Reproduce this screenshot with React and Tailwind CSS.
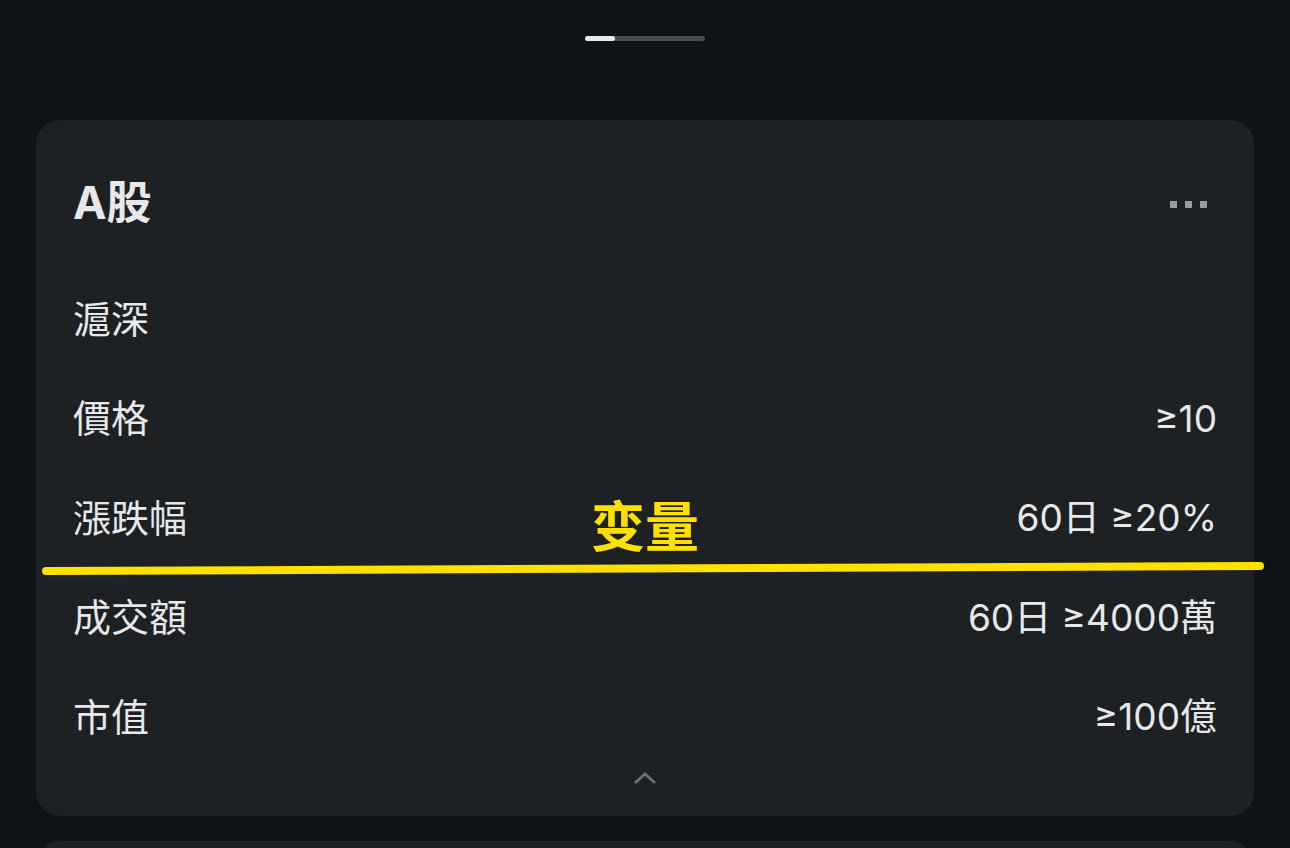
import React from "react";

const rows = [
    { label: "滬深", value: "" },
    { label: "價格", value: "≥10" },
    { label: "漲跌幅", value: "60日 ≥20%" },
    { label: "成交額", value: "60日 ≥4000萬" },
    { label: "市值", value: "≥100億" },
];

const font = {
    fontFamily: '"Inter", "Noto Sans CJK TC", sans-serif',
};

export default function App() {
    return (
        <div
            className="relative w-full h-[848px] overflow-hidden bg-[#101315] flex flex-col items-center"
            style={font}
        >
            {/* sheet handle */}
            <div className="mt-[36px] w-[120px] h-[5px] shrink-0 rounded-full bg-[#4a4c4e] flex">
                <div className="w-[30px] h-full rounded-full bg-[#e8eaeb]" />
            </div>

            {/* filter card */}
            <div className="mt-[79px] w-[1218px] h-[696px] shrink-0 rounded-[24px] bg-[#1e2123] px-[37px] pt-[40px] flex flex-col">
                <div className="h-[84px] shrink-0 flex items-center justify-between mb-[25px]">
                    <h2 className="text-[45px] font-bold text-[#e6e8ea] leading-none">A股</h2>
                    <div className="flex gap-[8px] mr-[10px] mt-[4px]">
                        <span className="w-[7px] h-[7px] bg-[#9a9ca0]" />
                        <span className="w-[7px] h-[7px] bg-[#9a9ca0]" />
                        <span className="w-[7px] h-[7px] bg-[#9a9ca0]" />
                    </div>
                </div>

                {rows.map((row, i) => (
                    <div key={i} className="h-[99.5px] shrink-0 flex items-center justify-between">
                        <span className="text-[38px] text-[#e6e8ea] leading-none">{row.label}</span>
                        <span className="text-[37px] text-[#e6e8ea] leading-none">{row.value}</span>
                    </div>
                ))}

                <div className="flex justify-center mt-[4px]">
                    <svg width="24" height="14" viewBox="0 0 24 14" fill="none">
                        <path d="M2 12 L12 3 L22 12" stroke="#6b6e72" strokeWidth="3" />
                    </svg>
                </div>
            </div>

            {/* next card peeking */}
            <div className="mt-[25px] w-[1218px] h-[60px] shrink-0 rounded-[24px] bg-[#1e2123]" />

            {/* annotation overlay */}
            <svg className="absolute inset-0 pointer-events-none" width="1290" height="848">
                <line x1="46" y1="571" x2="1260" y2="566" stroke="#ffe100" strokeWidth="8" strokeLinecap="round" />
            </svg>
            <span
                className="absolute left-[591px] top-[497px] text-[54px] font-bold text-[#ffe000] leading-none"
                style={{ fontFamily: '"Noto Sans CJK SC", sans-serif' }}
            >
                变量
            </span>
        </div>
    );
}
